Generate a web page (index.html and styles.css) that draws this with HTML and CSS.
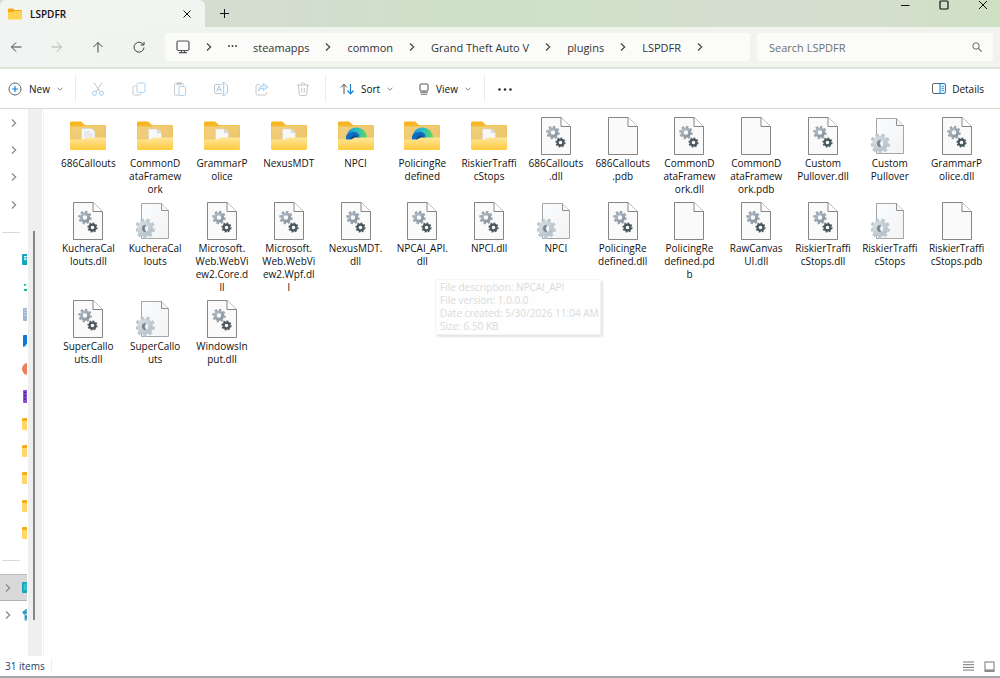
FILE: index.html
```html
<!DOCTYPE html>
<html lang="en">
<head>
<meta charset="utf-8">
<title>LSPDFR</title>
<link rel="stylesheet" href="styles.css">
</head>
<body>
<svg class="defs" aria-hidden="true">
  <defs>
    <linearGradient id="folder-back" x1="0" y1="0" x2="0" y2="1"><stop offset="0" stop-color="#f9b414"/><stop offset=".3" stop-color="#f0bd4c"/><stop offset="1" stop-color="#e9bd58"/></linearGradient>
    <linearGradient id="folder-inner" x1="0" y1="0" x2="1" y2="1"><stop offset="0" stop-color="#f3d07c"/><stop offset="1" stop-color="#e9c368"/></linearGradient>
    <linearGradient id="folder-front" x1="0" y1="0" x2="0" y2="1"><stop offset="0" stop-color="#ffe79b"/><stop offset="1" stop-color="#ffc93c"/></linearGradient>
    <linearGradient id="edge-green" x1="0" y1="0" x2="1" y2="0"><stop offset="0" stop-color="#1b86d6"/><stop offset=".45" stop-color="#27b9d4"/><stop offset="1" stop-color="#5fd956"/></linearGradient>
    <linearGradient id="gear-light" x1="0" y1="0" x2="1" y2="1"><stop offset="0" stop-color="#b4bec8"/><stop offset="1" stop-color="#84909a"/></linearGradient>
    <linearGradient id="ini-gear" x1="0" y1="0" x2="1" y2="1"><stop offset="0" stop-color="#d6dfe4"/><stop offset="1" stop-color="#b4c0c8"/></linearGradient>
    <linearGradient id="ini-page" x1="0" y1="0" x2="1" y2="1"><stop offset="0" stop-color="#fbfcfd"/><stop offset="1" stop-color="#f1f3f5"/></linearGradient>
  </defs>
  <symbol id="folder" viewBox="0 0 38 38">
    <path d="M1 6a1.500 1.500 0 0 1 1.500-1.500h9.500l4 3.500H35.500A1.500 1.500 0 0 1 37 9.500V31H1z" fill="url(#folder-back)"/>
    <path d="M1.500 9.500h14l1.500-1h19.500V31h-35z" fill="url(#folder-inner)"/>
  </symbol>
  <symbol id="folder-face" viewBox="0 0 38 38">
    <path d="M1 22.500h13l4-2H37V31.500A1.500 1.500 0 0 1 35.500 33h-33A1.500 1.500 0 0 1 1 31.500z" fill="url(#folder-front)"/>
  </symbol>
  <symbol id="folder-docs" viewBox="0 0 38 38">
    <use href="#folder"/>
    <path d="M12.500 12h9l4 3.500v8h-13z" fill="#f8f8f8" stroke="#d6d3cb" stroke-width=".6"/><path d="M21.500 12v3.500h4" fill="#dedede" stroke="#c8c8c8" stroke-width=".6"/>
    <use href="#folder-face"/>
  </symbol>
  <symbol id="folder-lines" viewBox="0 0 38 38">
    <use href="#folder"/>
    <path d="M12.500 11.500h10l3.500 3v9H12.500z" fill="#f4f6f7" stroke="#cfd1d2" stroke-width=".6"/><path d="M15 15h6M15 17h8.500M15 19h8.500" stroke="#c5cdd2" stroke-width=".6"/>
    <use href="#folder-face"/>
  </symbol>
  <symbol id="folder-edge" viewBox="0 0 38 38">
    <use href="#folder"/>
    <path d="M9 20.500c1-6 5-10 10.500-10s10 4 10.500 10l-1 2.500H9z" fill="url(#edge-green)"/><path d="M9 22c0-5 4-7 8-7 3 0 5.500 2 5.500 4.500h-4c-1.500 0-2 1.500-2 3H9z" fill="#0f6bbd"/><path d="M13 23c.5-3 2.500-5 6-4.500l4 2-2 2.500z" fill="#164b86"/>
    <use href="#folder-face"/>
  </symbol>
  <symbol id="page" viewBox="0 0 38 38">
    <path d="M4.500 .5H24L33.500 9.500V37.500H4.500z" fill="#fafafa" stroke="#858585"/>
    <path d="M24 .5V9.500H33.500" fill="#fff" stroke="#858585"/>
  </symbol>
  <symbol id="dll" viewBox="0 0 38 38">
    <use href="#page"/>
    <circle cx="16" cy="15.500" r="3.700" fill="none" stroke="url(#gear-light)" stroke-width="3"/>
    <circle cx="16" cy="15.500" r="5.700" fill="none" stroke="#9aa5af" stroke-width="2.200" pathLength="80" stroke-dasharray="5.500 4.500"/>
    <circle cx="23.500" cy="25.500" r="2.900" fill="none" stroke="#4c585f" stroke-width="2.200"/>
    <circle cx="23.500" cy="25.500" r="4.300" fill="none" stroke="#4c585f" stroke-width="1.600" pathLength="80" stroke-dasharray="5.500 4.500"/>
  </symbol>
  <symbol id="ini" viewBox="0 0 38 38">
    <path d="M5.500 1.500H25.500L32.500 8.500V36.500H5.500z" fill="url(#ini-page)" stroke="#a3a6a8"/>
    <path d="M25.500 1.500V8.500H32.500" fill="#f4f6f7" stroke="#8e9294"/>
    <circle cx="9" cy="26.500" r="5.500" fill="none" stroke="url(#ini-gear)" stroke-width="5"/>
    <circle cx="9" cy="26.500" r="8.600" fill="none" stroke="#bdc8cf" stroke-width="3" pathLength="90" stroke-dasharray="5.500 4.500"/>
    <circle cx="9" cy="26.500" r="3.200" fill="#f1f4f6"/><path d="M9.500 23.300a3.200 3.200 0 0 0 0 6.400q-2.200-3.200 0-6.400z" fill="#77838b" stroke="#77838b"/>
  </symbol>
  <symbol id="chev" viewBox="0 0 6 8"><path d="M1 .5 4.700 4 1 7.500" fill="none" stroke="currentColor" stroke-width="1.200"/></symbol>
  <symbol id="down" viewBox="0 0 6 4"><path d="M.5 .7 3 3.200 5.500 .7" fill="none" stroke="currentColor" stroke-width=".8"/></symbol>
  <symbol id="mini-folder" viewBox="0 0 5 12"><path d="M0 1.500Q0 0 1.500 0H5v12H1.500Q0 12 0 10.500z" fill="#ffd768"/><path d="M0 3V1.500Q0 0 1.500 0H5v3z" fill="#f5ad10"/></symbol>
</svg>

<div class="window">
  <header class="titlebar">
    <div class="tab">
      <svg class="tab-icon" viewBox="0 0 14 12"><path d="M0 1.500Q0 .5 1 .5h4L6.500 2H13q1 0 1 1v7H0z" fill="#f0a818"/><path d="M0 4h5.500l1.500-1h6q1 0 1 1v6.500q0 1-1 1H1q-1 0-1-1z" fill="#ffd251"/></svg>
      <span class="tab-title">LSPDFR</span>
      <button class="plain" aria-label="Close tab"><svg width="8" height="8" viewBox="0 0 8 8"><path d="M.5 .5l7 7M7.500 .5l-7 7" stroke="currentColor"/></svg></button>
    </div>
    <button class="plain new-tab" aria-label="New tab"><svg width="9" height="9" viewBox="0 0 9 9"><path d="M4.500 0v9M0 4.500h9" stroke="currentColor"/></svg></button>
    <div class="controls">
      <button class="plain" aria-label="Minimize"><svg width="10" height="10" viewBox="0 0 10 10"><path d="M1 5.500h8.500" stroke="currentColor"/></svg></button>
      <button class="plain" aria-label="Maximize"><svg width="10" height="10" viewBox="0 0 10 10"><rect x="1" y="1" width="8" height="8" rx="1" fill="none" stroke="currentColor" stroke-width="1.200"/></svg></button>
      <button class="plain" aria-label="Close"><svg width="10" height="10" viewBox="0 0 10 10"><path d="M1 1l8 8M9 1l-8 8" stroke="currentColor"/></svg></button>
    </div>
  </header>

  <div class="navbar">
    <div class="nav-buttons">
      <button class="plain" aria-label="Back"><svg width="12" height="12" viewBox="0 0 12 12"><path d="M6 1.500 1.500 6 6 10.500M1.500 6H11.500" fill="none" stroke="currentColor"/></svg></button>
      <button class="plain dim" aria-label="Forward"><svg width="12" height="12" viewBox="0 0 12 12"><path d="M6 1.500 10.500 6 6 10.500M10.500 6H.5" fill="none" stroke="currentColor"/></svg></button>
      <button class="plain" aria-label="Up"><svg width="12" height="12" viewBox="0 0 12 12"><path d="M1.500 6 6 1.500 10.500 6M6 1.500V11.500" fill="none" stroke="currentColor"/></svg></button>
      <button class="plain" aria-label="Refresh"><svg width="12" height="12" viewBox="0 0 12 12"><path d="M10.500 4A5 5 0 1 0 11 6.500M11 .8V4H7.700" fill="none" stroke="currentColor"/></svg></button>
    </div>
    <nav class="address" aria-label="Address">
      <svg width="14" height="14" viewBox="0 0 14 14"><rect x="1" y="1" width="12" height="9.500" rx="1.500" fill="none" stroke="#555" stroke-width="1.200"/><path d="M3 12.600h8" stroke="#555" stroke-width="1.400"/><path d="M5.500 10.500v2M8.500 10.500v2" stroke="#555"/></svg>
      <svg class="chev"><use href="#chev"/></svg>
      <svg width="9" height="8" viewBox="0 0 9 8"><g fill="#333"><circle cx="1" cy="3" r=".9"/><circle cx="4.500" cy="3" r=".9"/><circle cx="8" cy="3" r=".9"/></g></svg>
      <a href="#">steamapps</a><svg class="chev"><use href="#chev"/></svg>
      <a href="#">common</a><svg class="chev"><use href="#chev"/></svg>
      <a href="#">Grand Theft Auto V</a><svg class="chev"><use href="#chev"/></svg>
      <a href="#">plugins</a><svg class="chev"><use href="#chev"/></svg>
      <a href="#">LSPDFR</a><svg class="chev"><use href="#chev"/></svg>
    </nav>
    <div class="search">
      <input type="text" placeholder="Search LSPDFR" aria-label="Search LSPDFR">
      <svg width="10" height="10" viewBox="0 0 10 10"><circle cx="4" cy="4" r="3.200" fill="none" stroke="#666"/><path d="M6.400 6.400 9.600 9.600" stroke="#666" stroke-width="1.200"/></svg>
    </div>
  </div>

  <div class="toolbar">
    <button class="plain tool new"><svg width="14" height="14" viewBox="0 0 14 14"><circle cx="7" cy="7" r="6" fill="none" stroke="#5c6670"/><path d="M7 4v6M4 7h6" stroke="#1583d8" stroke-width="1.200"/></svg><span>New</span><svg class="down"><use href="#down"/></svg></button>
    <span class="sep"></span>
    <div class="actions">
      <button class="plain" aria-label="Cut"><svg width="14" height="14" viewBox="0 0 14 14"><path d="M3 .5l6 9.300M11 .5 5 9.800" stroke="#c4c4c4"/><circle cx="3.500" cy="11.300" r="2" fill="none" stroke="#9fcdf2"/><circle cx="10.500" cy="11.300" r="2" fill="none" stroke="#9fcdf2"/></svg></button>
      <button class="plain" aria-label="Copy"><svg width="14" height="14" viewBox="0 0 14 14"><path d="M3.500 4H2.500A1.500 1.500 0 0 0 1 5.500v6A1.500 1.500 0 0 0 2.500 13h5A1.500 1.500 0 0 0 9 11.500" fill="none" stroke="#c8c8c8"/><rect x="5" y="1" width="8" height="9.500" rx="1.500" fill="none" stroke="#a9d2f3"/></svg></button>
      <button class="plain" aria-label="Paste"><svg width="14" height="14" viewBox="0 0 14 14"><path d="M6 13H2.500A1 1 0 0 1 1.500 12V2.500A1 1 0 0 1 2.500 1.500H9.500A1 1 0 0 1 10.500 2.500V3.500M4 .7h4.500v2H4z" fill="none" stroke="#c8c8c8"/><rect x="6" y="4.500" width="6.500" height="9" rx="1" fill="#fff" stroke="#a9d2f3"/></svg></button>
      <button class="plain" aria-label="Rename"><svg width="14" height="14" viewBox="0 0 14 14"><path d="M8 2.500H2A1.500 1.500 0 0 0 .5 4v6A1.500 1.500 0 0 0 2 11.500H8M11.500 2.500h.5A1.500 1.500 0 0 1 13.500 4v6a1.500 1.500 0 0 1-1.500 1.500h-.5" fill="none" stroke="#c8c8c8"/><path d="M2.500 9.500 5 4l2.500 5.500M3.500 7.700h3M9.700 .8v12.400M8 .8h3.500M8 13.200h3.500" fill="none" stroke="#9fcdf2"/></svg></button>
      <button class="plain" aria-label="Share"><svg width="14" height="14" viewBox="0 0 14 14"><path d="M5 2.500H2.500A1.500 1.500 0 0 0 1 4v7.500A1.500 1.500 0 0 0 2.500 13H10a1.500 1.500 0 0 0 1.500-1.500V10" fill="none" stroke="#c8c8c8"/><path d="M8.500 1.500 13 5 8.500 8.500v-2C6 6.500 4.500 7.500 3.500 9c.3-3 2-5.300 5-5.500z" fill="#e3f1fc" stroke="#a3cff2"/></svg></button>
      <button class="plain" aria-label="Delete"><svg width="14" height="14" viewBox="0 0 14 14"><path d="M1 3h12M2.300 3l1 9.500q.1 1 1 1h5.400q.9 0 1-1l1-9.500M5 3Q5 .7 7 .7T9 3M5.700 6v4.500M8.300 6v4.500" fill="none" stroke="#c4c4c4"/></svg></button>
    </div>
    <span class="sep"></span>
    <button class="plain tool sort"><svg width="14" height="12" viewBox="0 0 14 12"><path d="M1 4.500 4 1.200 7 4.500M4 1.200V11" fill="none" stroke="#555"/><path d="M7.500 7.500 10.500 10.800 13.500 7.500M10.500 10.800V1" fill="none" stroke="#1583d8" stroke-width="1.200"/></svg><span>Sort</span><svg class="down"><use href="#down"/></svg></button>
    <button class="plain tool view"><svg width="10" height="12" viewBox="0 0 10 12"><rect x="1" y="1" width="8" height="7" rx="1" fill="none" stroke="#555"/><path d="M1 9.200h8M2 11.200h6" stroke="#666"/></svg><span>View</span><svg class="down"><use href="#down"/></svg></button>
    <span class="sep"></span>
    <button class="plain more" aria-label="See more"><svg width="14" height="6" viewBox="0 0 14 6"><g fill="#222"><circle cx="1.500" cy="3.500" r="1.200"/><circle cx="7" cy="3.500" r="1.200"/><circle cx="12.500" cy="3.500" r="1.200"/></g></svg></button>
    <button class="plain tool details"><svg width="14" height="11" viewBox="0 0 14 11"><path d="M8 .5H2A1.500 1.500 0 0 0 .5 2v7A1.500 1.500 0 0 0 2 10.500H8" fill="none" stroke="#666"/><path d="M8 .5h4A1.500 1.500 0 0 1 13.500 2v7a1.500 1.500 0 0 1-1.500 1.500H8z" fill="#e0f0fc" stroke="#1583d8"/><path d="M9.500 3.500h2.500M9.500 5.500h2.500M9.500 7.500h2.500" stroke="#5aaae6"/></svg><span>Details</span></button>
  </div>

  <div class="body">
    <aside class="sidebar">
      <div class="tree">
        <div class="node outer"><svg class="chev"><use href="#chev"/></svg></div>
        <div class="node outer"><svg class="chev"><use href="#chev"/></svg></div>
        <div class="node outer"><svg class="chev"><use href="#chev"/></svg></div>
        <div class="node outer"><svg class="chev"><use href="#chev"/></svg></div>
        <div class="rule"></div>
        <div class="node leaf"><svg width="5" height="11" viewBox="0 0 5 11"><rect width="7" height="11" rx="1" fill="#16a3bd"/><path d="M2 2.500h3M2 5h3M3 2.500v4" stroke="#dff6fa"/></svg></div>
        <div class="node leaf"><svg width="5" height="11" viewBox="0 0 5 11"><path d="M2 4h1.500M2 9h3" stroke="#25bd86" stroke-width="2"/><path d="M4 3v1" stroke="#25bd86"/></svg></div>
        <div class="node leaf"><svg width="4" height="13" viewBox="0 0 4 13"><rect width="6" height="13" rx="1" fill="#9fb6d2"/><path d="M1 2h3M1 4.500h3M1 7h3" stroke="#c3d2e4"/></svg></div>
        <div class="node leaf"><svg width="4" height="12" viewBox="0 0 4 12"><rect width="6" height="12" rx="1" fill="#0f78d0"/><path d="M1 12 4 8.500V12z" fill="#d7edfc"/></svg></div>
        <div class="node leaf"><svg width="5" height="12" viewBox="0 0 5 12"><circle cx="6" cy="6" r="6" fill="#ec8058"/></svg></div>
        <div class="node leaf"><svg width="4" height="13" viewBox="0 0 4 13"><rect width="6" height="13" rx="1" fill="#9152e0"/><path d="M2 1.500v10" stroke="#44228c" stroke-dasharray="2 1.200" stroke-width="1.500"/></svg></div>
        <div class="node leaf"><svg width="5" height="12"><use href="#mini-folder"/></svg></div>
        <div class="node leaf"><svg width="5" height="12"><use href="#mini-folder"/></svg></div>
        <div class="node leaf"><svg width="5" height="12"><use href="#mini-folder"/></svg></div>
        <div class="node leaf"><svg width="5" height="12"><use href="#mini-folder"/></svg></div>
        <div class="node leaf"><svg width="5" height="12"><use href="#mini-folder"/></svg></div>
        <div class="rule"></div>
        <div class="node selected"><svg class="chev"><use href="#chev"/></svg><svg width="5" height="11" viewBox="0 0 5 11"><rect width="7" height="11" rx="1" fill="#16a3b8"/><path d="M1.500 1.500H5v7H1.500z" fill="#35bfd0"/></svg></div>
        <div class="node"><svg class="chev"><use href="#chev"/></svg><svg width="5" height="12" viewBox="0 0 5 12"><path d="M0 3 4 0h1v5L2 6zM2.500 6H5v5.500H2.500z" fill="#51a9c9"/><path d="M1.500 3.500h2M3 8h2" stroke="#1b6f9a"/></svg></div>
      </div>
      <div class="scroll"><div class="thumb"></div></div>
    </aside>

    <main class="files">
      <ul class="grid">
        <li><svg><use href="#folder-lines"/></svg><span>686Callouts</span></li>
        <li><svg><use href="#folder-docs"/></svg><span>CommonD<br>ataFramew<br>ork</span></li>
        <li><svg><use href="#folder-docs"/></svg><span>GrammarP<br>olice</span></li>
        <li><svg><use href="#folder-docs"/></svg><span>NexusMDT</span></li>
        <li><svg><use href="#folder-edge"/></svg><span>NPCI</span></li>
        <li><svg><use href="#folder-edge"/></svg><span>PolicingRe<br>defined</span></li>
        <li><svg><use href="#folder-docs"/></svg><span>RiskierTraffi<br>cStops</span></li>
        <li><svg><use href="#dll"/></svg><span>686Callouts<br>.dll</span></li>
        <li><svg><use href="#page"/></svg><span>686Callouts<br>.pdb</span></li>
        <li><svg><use href="#dll"/></svg><span>CommonD<br>ataFramew<br>ork.dll</span></li>
        <li><svg><use href="#page"/></svg><span>CommonD<br>ataFramew<br>ork.pdb</span></li>
        <li><svg><use href="#dll"/></svg><span>Custom<br>Pullover.dll</span></li>
        <li><svg><use href="#ini"/></svg><span>Custom<br>Pullover</span></li>
        <li><svg><use href="#dll"/></svg><span>GrammarP<br>olice.dll</span></li>
        <li><svg><use href="#dll"/></svg><span>KucheraCal<br>louts.dll</span></li>
        <li><svg><use href="#ini"/></svg><span>KucheraCal<br>louts</span></li>
        <li><svg><use href="#dll"/></svg><span>Microsoft.<br>Web.WebVi<br>ew2.Core.d<br>ll</span></li>
        <li><svg><use href="#dll"/></svg><span>Microsoft.<br>Web.WebVi<br>ew2.Wpf.dl<br>l</span></li>
        <li><svg><use href="#dll"/></svg><span>NexusMDT.<br>dll</span></li>
        <li><svg><use href="#dll"/></svg><span>NPCAI_API.<br>dll</span></li>
        <li><svg><use href="#dll"/></svg><span>NPCI.dll</span></li>
        <li><svg><use href="#ini"/></svg><span>NPCI</span></li>
        <li><svg><use href="#dll"/></svg><span>PolicingRe<br>defined.dll</span></li>
        <li><svg><use href="#page"/></svg><span>PolicingRe<br>defined.pd<br>b</span></li>
        <li><svg><use href="#dll"/></svg><span>RawCanvas<br>UI.dll</span></li>
        <li><svg><use href="#dll"/></svg><span>RiskierTraffi<br>cStops.dll</span></li>
        <li><svg><use href="#ini"/></svg><span>RiskierTraffi<br>cStops</span></li>
        <li><svg><use href="#page"/></svg><span>RiskierTraffi<br>cStops.pdb</span></li>
        <li><svg><use href="#dll"/></svg><span>SuperCallo<br>uts.dll</span></li>
        <li><svg><use href="#ini"/></svg><span>SuperCallo<br>uts</span></li>
        <li><svg><use href="#dll"/></svg><span>WindowsIn<br>put.dll</span></li>
      </ul>
      <div class="tooltip" role="tooltip">File description: NPCAI_API<br>File version: 1.0.0.0<br>Date created: 5/30/2026 11:04 AM<br>Size: 6.50 KB</div>
    </main>
  </div>

  <footer class="status">
    <span class="count">31 items</span>
    <div class="modes">
      <button class="plain" aria-label="Details view"><svg width="11" height="10" viewBox="0 0 11 10"><path d="M0 1h11M0 3.700h11M0 6.400h11M0 9.100h11" stroke="#777"/></svg></button>
      <button class="plain" aria-label="Large icons view"><svg width="11" height="11" viewBox="0 0 11 11"><rect x="1" y="1" width="9" height="8" fill="#fff" stroke="#777"/><path d="M.5 10h10" stroke="#8a8a8a" stroke-width="2"/></svg></button>
    </div>
  </footer>
</div>
</body>
</html>
```
FILE: styles.css
```css
* { box-sizing: border-box; }
body { margin: 0; font-family: "Open Sans", "Noto Sans", sans-serif; font-size: 10px; color: #111; background: #fff; }
.defs { position: absolute; width: 0; height: 0; }
svg { display: block; flex: none; }
.plain { display: flex; align-items: center; justify-content: center; border: 0; padding: 0; background: none; font: inherit; color: inherit; }
.chev { width: 6px; height: 8px; color: #444; }
.down { width: 6px; height: 4px; color: #666; }

.window { display: flex; flex-direction: column; height: 100vh; border-bottom: 2px solid #a2a7af; }

.titlebar { display: flex; flex: none; height: 27px; background: linear-gradient(90deg, #d2dfd0, #d3ddd0 28%, #cfe0c8 45%, #d0e0ca 60%, #d5decf 72%, #d4dfce 88%, #cee0c3); }
.tab { display: flex; align-items: center; width: 205px; padding: 0 14px 0 8px; background: #f1f4f1; border-radius: 6px 6px 0 0; }
.tab-icon { width: 14px; height: 12px; }
.tab-title { flex: 1; margin-left: 8px; font-weight: 600; }
.new-tab { width: 39px; }
.controls { display: flex; gap: 29px; height: 10px; margin-left: auto; padding-right: 12px; }

.navbar { display: flex; flex: none; align-items: center; gap: 7px; height: 42px; padding: 0 7px 0 10px; background: linear-gradient(90deg, #f1f4f2, #eff4ec 45%, #f1f4ee); border-bottom: 2px solid #dde4da; }
.nav-buttons { display: flex; gap: 29px; width: 148px; color: #444; }
.nav-buttons .dim { color: #b2b6b2; }
.address { display: flex; flex: 563; align-items: center; gap: 16px; height: 28px; padding: 0 11px; font-size: 11px; background: #fbfcfa; border-radius: 4px; }
.address a { color: #333; text-decoration: none; white-space: nowrap; }
.search { display: flex; flex: 213; align-items: center; height: 28px; padding: 0 11px 0 12px; background: #fbfcfa; border-radius: 4px; }
.search input { flex: 1; min-width: 0; padding: 0; border: 0; outline: 0; background: none; font: inherit; font-size: 11px; color: #333; }
.search input::placeholder { color: #707070; opacity: 1; }

.toolbar { display: flex; flex: none; align-items: center; height: 40px; padding: 0 16px 0 8px; border-bottom: 1px solid #d8dccf; }
.tool { gap: 7px; }
.sep { width: 1px; height: 27px; background: #ececec; }
.new { margin-right: 12px; }
.actions { display: flex; gap: 27px; margin: 0 15px; }
.sort { margin: 0 26px 0 14px; }
.view { margin-right: 13px; }
.more { margin-left: 13px; }
.details { margin-left: auto; gap: 6px; }

.body { display: flex; flex: 1; min-height: 0; }
.sidebar { display: flex; flex: none; width: 44px; border-right: 1px solid #f3f3f3; }
.tree { display: grid; grid-template-rows: repeat(20, 1fr); width: 27px; }
.node { display: flex; align-items: center; justify-content: space-between; padding-left: 5px; }
.node .chev { color: #888; }
.outer { padding-left: 11px; }
.leaf { justify-content: flex-end; }
.selected { background: #d9d9d9; border-top: 1px solid #bfbfbf; border-bottom: 1px solid #b2b2b2; }
.rule { align-self: center; height: 1px; margin: 0 7px 0 2px; background: #d8d8d8; }
.scroll { width: 14px; margin-left: 1px; padding: 122px 0 36px 5px; background: #efefef; }
.thumb { width: 2px; height: 100%; background: #868686; }

.files { position: relative; flex: 1; padding: 8px 10px 0 11px; }
.grid { display: grid; grid-template-columns: repeat(14, 1fr); row-gap: 6px; margin: 0; padding: 0; list-style: none; }
.grid li { display: flex; flex-direction: column; align-items: center; gap: 2px; min-width: 0; }
.grid svg { width: 38px; height: 38px; }
.grid span { line-height: 13px; text-align: center; white-space: nowrap; }
.tooltip { position: absolute; left: 391px; top: 170px; padding: 1px 1px 1px 4px; line-height: 13px; color: #dadada; background: #fefefe; border: 1px solid #f5f5f5; box-shadow: 2px 2px 2px #e4e4e4; white-space: nowrap; }

.status { display: flex; flex: none; align-items: center; height: 20px; padding: 0 5px; color: #1f3a63; }
.count { padding-right: 6px; border-right: 1px solid #eee; }
.modes { display: flex; gap: 10px; margin-left: auto; }
```
